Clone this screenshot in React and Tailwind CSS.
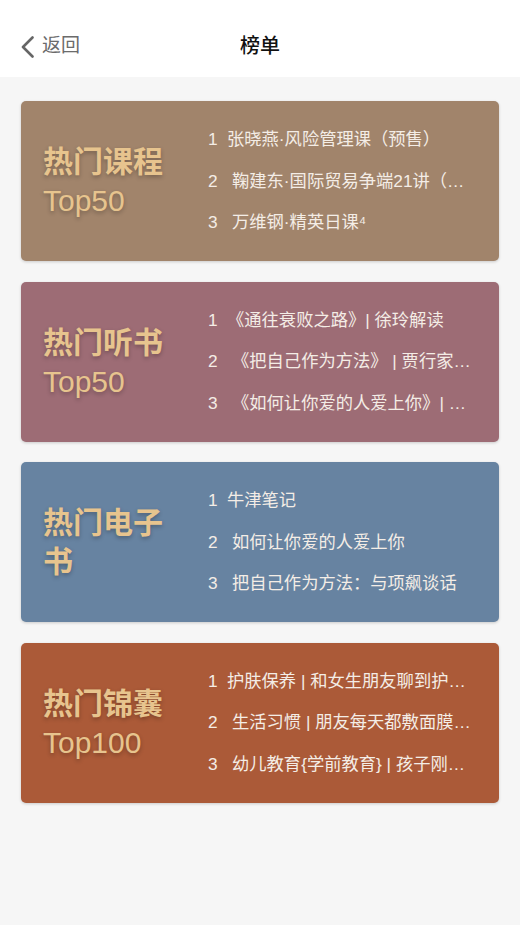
import React from "react";

const cards = [
  {
    bg: "bg-[#a1846b]",
    title: ["热门课程", "Top50"],
    items: ["张晓燕·风险管理课（预售）", "鞠建东·国际贸易争端21讲（全集）", "万维钢·精英日课⁴"],
  },
  {
    bg: "bg-[#9d6c75]",
    title: ["热门听书", "Top50"],
    items: ["《通往衰败之路》| 徐玲解读", "《把自己作为方法》 | 贾行家解读", "《如何让你爱的人爱上你》| 怀沙解读"],
  },
  {
    bg: "bg-[#6783a1]",
    title: ["热门电子书"],
    items: ["牛津笔记", "如何让你爱的人爱上你", "把自己作为方法：与项飙谈话"],
  },
  {
    bg: "bg-[#ab5a38]",
    title: ["热门锦囊", "Top100"],
    items: ["护肤保养 | 和女生朋友聊到护肤品", "生活习惯 | 朋友每天都敷面膜，皮肤还是很差", "幼儿教育{学前教育} | 孩子刚上幼儿园"],
  },
];

function Card({ card }) {
  return (
    <div className={`flex h-[160px] items-center rounded-[5px] pl-[22px] pr-[22px] shadow-[0_1px_3px_rgba(0,0,0,0.18)] ${card.bg}`}>
      <div className="w-[132px] shrink-0 text-[30px] leading-[39px] text-[#e7c48e] [text-shadow:0_2px_4px_rgba(0,0,0,0.28)]">
        {card.title.map((t, i) => (
          <div key={i} className={/[A-Za-z]/.test(t) ? "font-normal" : "font-bold"}>
            {t}
          </div>
        ))}
      </div>
      <div className="ml-[33px] flex min-w-0 flex-1 flex-col pt-[1px]">
        {card.items.map((t, i) => (
          <div key={i} className="flex h-[41.5px] items-center text-[17.3px] text-[#f4ede6]">
            <span className={i === 0 ? "w-[19px] shrink-0" : "w-[24px] shrink-0"}>{i + 1}</span>
            <span className="min-w-0 truncate">{t}</span>
          </div>
        ))}
      </div>
    </div>
  );
}

export default function App() {
  return (
    <div className="min-h-[925px] bg-[#f6f6f6] [font-family:'Liberation_Sans','Noto_Sans_CJK_SC',sans-serif]">
      <div className="relative flex h-[77px] items-center bg-white pt-[16px]">
        <div className="ml-[21px] flex items-center text-[#6b6b6b]">
          <svg width="13" height="22" viewBox="0 0 13 22" fill="none">
            <path d="M11.5 1.5 L2 11 L11.5 20.5" stroke="#666" strokeWidth="2.6" strokeLinecap="round" strokeLinejoin="round" />
          </svg>
          <span className="ml-[8px] text-[19px]">返回</span>
        </div>
        <div className="absolute left-1/2 top-[31px] -translate-x-1/2 text-[20px] font-medium text-[#111]">榜单</div>
      </div>
      <div className="flex flex-col gap-[20.5px] px-[21px] pt-[24px]">
        {cards.map((c, i) => (
          <Card key={i} card={c} />
        ))}
      </div>
    </div>
  );
}
